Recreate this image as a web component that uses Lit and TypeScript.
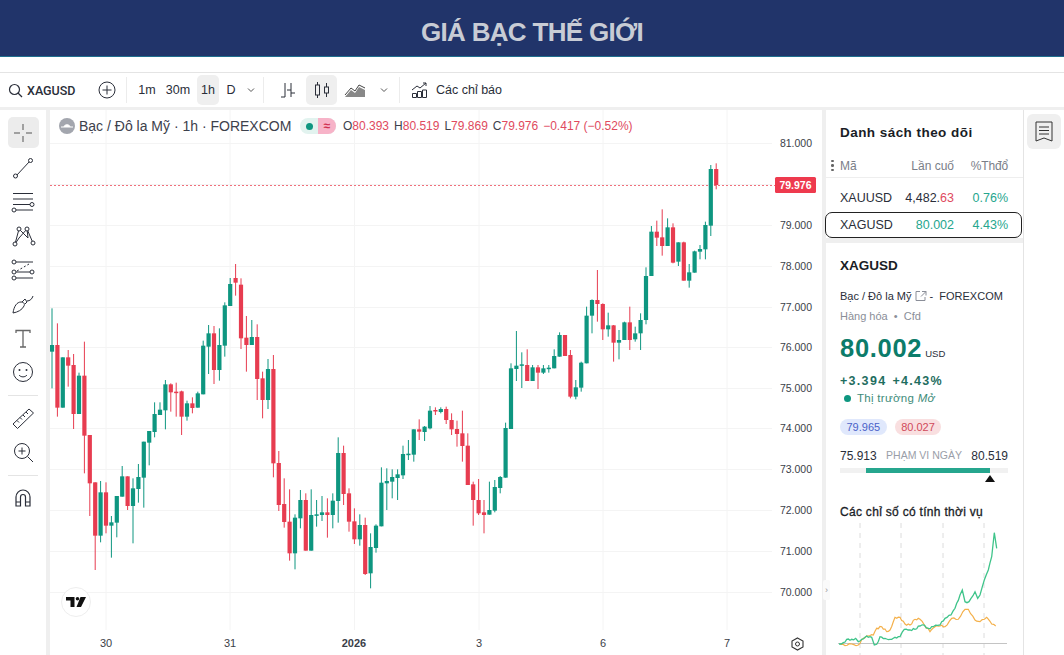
import { LitElement, html, css, svg } from "lit";
import { customElement } from "lit/decorators.js";

const G = "#0e9680";
const R = "#e73c50";
type C = [number, number, number, number, number];
// [color(0 green,1 red), high, bodyTop, bodyBottom, low] measured at 3x, per segment with base y
const A: C[] = [
  [0,85,195,215,325],[1,130,195,383,410],[0,232,232,383,383],[1,210,232,257,320],[1,222,255,402,447],[0,278,287,402,402],[1,185,287,467,580],[1,465,465,610,708],[1,607,607,767,870],[0,603,637,767,787],[1,607,637,737,760],[0,708,727,737,833],[0,648,648,728,772],[0,558,589,650,650],[1,589,589,678,690],[0,595,625,678,790],[0,552,591,627,668],[0,485,485,593,683],[0,453,453,488,556],[0,367,402,456,472],[0,367,389,405,405],[0,300,313,391,448],[1,310,313,337,395],[1,308,335,338,410],[1,332,334,410,465],[0,362,370,410,422],[1,352,370,384,400],[0,335,340,383,383],[0,182,197,343,343],[0,135,160,200,282],[1,138,160,270,312],[0,145,195,270,302],[0,67,76,197,230],[0,-6,12,78,78],[1,-48,-6,8,47],[1,-5,14,175,207],[1,108,173,195,275],[0,120,171,195,195],[1,133,171,297,360],[1,275,295,360,415],[0,237,267,360,387],[1,225,267,550,592],[1,513,549,675,693],[1,595,672,726,743],[1,628,725,820,842],[0,703,713,820,868],[0,630,660,715,745],[1,640,660,812,812],
];
const B: C[] = [
  [0,328,405,512,512],[0,360,403,405,440],[0,348,397,405,423],[1,355,397,405,473],[0,340,362,405,445],[0,172,219,363,428],[1,197,219,342,375],[1,325,340,425,455],[1,385,424,478,492],[0,403,435,478,497],[1,413,435,582,585],[0,460,501,580,625],[0,433,437,504,518],[0,262,308,439,439],[0,265,303,310,390],[0,268,291,305,355],[0,268,283,294,360],[0,197,222,286,297],[0,180,221,224,240],[0,148,148,224,245],[1,118,148,155,180],[0,138,140,156,183],[0,78,92,145,148],[1,82,90,93,105],[0,82,87,96,100],[1,80,87,120,132],[1,100,120,148,165],[1,122,147,162,200],[1,92,160,198,245],[1,160,197,315,315],[1,305,313,360,437],[1,297,360,400,405],[1,360,397,405,460],[0,305,390,404,404],[0,300,321,392,397],[0,288,291,324,340],[0,128,144,293,293],
];
const Cc: C[] = [
  [0,130,145,327,327],[0,33,137,147,183],[0,97,133,137,204],[1,88,135,183,183],[0,135,142,183,183],[1,135,142,158,207],[0,135,145,158,162],[0,135,143,147,158],
];
const D: C[] = [
  [0,628,648,685,685],[0,577,585,650,650],[1,585,585,648,648],[1,630,645,770,775],[0,720,742,770,778],[0,665,668,743,755],[0,500,527,670,670],[0,478,480,527,580],[1,390,480,492,545],[1,490,492,568,600],[0,518,556,568,590],[1,555,556,608,665],[0,570,600,608,658],[0,545,547,600,600],[1,500,547,600,630],[0,560,580,598,605],[0,520,540,580,630],[0,382,408,540,553],[0,258,275,408,408],[1,242,275,293,318],[1,208,292,318,347],[0,235,262,318,318],[1,250,262,368,370],[0,307,307,365,378],[1,305,307,422,422],[0,372,397,422,443],[0,332,334,398,398],[0,315,327,335,358],[0,245,255,328,358],[0,75,87,257,288],[1,70,87,135,148],
];
const seg = (a: C[], base: number) => a.map(([c, h, t, b, l]) => [c, base + h / 3, base + t / 3, base + b / 3, base + l / 3]);
const candles = [...seg(A, 280), ...seg(B, 380), ...seg(Cc, 320), ...seg(D, 140)];

const priceLabels = [[81, 143], [79, 225], [78, 266], [77, 307], [76, 347], [75, 388], [74, 428], [73, 469], [72, 510], [71, 551], [70, 592]];
const gridY = [143, 184, 225, 266, 307, 347, 388, 428, 469, 510, 551, 592];
const gridX = [106, 230, 354.5, 479, 603, 727];
const times: [string, number, boolean][] = [["30", 106, false], ["31", 230, false], ["2026", 354, true], ["3", 479, false], ["6", 603, false], ["7", 727, false]];

const greenPts = [[42,372],[55,368],[65,358],[80,358],[92,355],[100,365],[110,358],[125,348],[140,352],[148,375],[155,373],[165,350],[180,355],[195,358],[210,352],[225,350],[238,328],[255,330],[270,328],[285,318],[298,315],[310,325],[325,320],[345,315],[360,295],[378,285],[390,265],[405,225],[412,210],[420,245],[432,245],[450,215],[458,235],[465,225],[478,180],[490,150],[500,110],[508,38],[515,85]];
const orangePts = [[45,372],[60,377],[80,372],[100,375],[115,355],[130,348],[145,345],[155,325],[170,320],[185,335],[195,330],[210,292],[225,292],[240,312],[255,315],[270,298],[285,298],[298,315],[315,335],[330,320],[345,318],[360,320],[380,295],[400,298],[420,268],[430,268],[450,300],[465,305],[485,292],[500,312],[512,318]];
function spark(pts: number[][]) {
  const out: string[] = [];
  pts.forEach((p, i) => {
    if (i > 0) {
      const q = pts[i - 1];
      const n = Math.max(1, Math.round((p[0] - q[0]) / 6));
      for (let k = 1; k < n; k++) {
        const f = k / n;
        const x = q[0] + (p[0] - q[0]) * f;
        const y = q[1] + (p[1] - q[1]) * f + 3 * Math.sin(x * 1.7) ;
        out.push(`${(x / 3).toFixed(1)},${(y / 3).toFixed(1)}`);
      }
    }
    out.push(`${(p[0] / 3).toFixed(1)},${(p[1] / 3).toFixed(1)}`);
  });
  return out.join(" ");
}

const I = (body: unknown) => html`<svg width="28" height="28" viewBox="0 0 28 28" fill="none" stroke="#2a2e39" stroke-width="1">${body}</svg>`;
const tools = [
  svg`<path d="M14 5v6M14 17v6M5 14h6M17 14h6" stroke="#555" />`,
  svg`<path d="M7.5 21.5L20.5 7.5"/><circle cx="6.5" cy="22" r="2" fill="#fff"/><circle cx="21.5" cy="6.5" r="2" fill="#fff"/>`,
  svg`<path d="M4 5.5h20M4 11h20M4 16.500h17M7 22h17"/><circle cx="23" cy="16.500" r="2" fill="#fff"/><circle cx="5" cy="22" r="2" fill="#fff"/>`,
  svg`<path d="M6 22L10 7l9 9L18 7l6 14M10 7l9 9M18 7l-8 9-4 6"/><circle cx="6" cy="22" r="2" fill="#fff"/><circle cx="10" cy="7" r="2" fill="#fff"/><circle cx="18" cy="7" r="2" fill="#fff"/><circle cx="24" cy="21" r="2" fill="#fff"/>`,
  svg`<path d="M7 6h17M7 16h15M7 22h17" /><path d="M8 15l12-7" stroke-dasharray="2 2"/><circle cx="5" cy="6" r="2" fill="#fff"/><circle cx="5" cy="16" r="2" fill="#fff"/><circle cx="23" cy="16" r="2" fill="#fff"/><circle cx="5" cy="22" r="2" fill="#fff"/>`,
  svg`<path d="M4 23c1-7 4-11 8-11 3 0 4 2 3 4-2 4-6 6-11 7zM13 12l3-3 2 3-2 2M18 11c3 0 5-2 6-5"/>`,
  svg`<path d="M7 9V6.500h14V9M14 6.500V23M11 23h6" stroke="#666" stroke-width="1.300"/>`,
  svg`<circle cx="14" cy="14" r="9.500"/><circle cx="10.500" cy="12" r="1" fill="#2a2e39" stroke="none"/><circle cx="17.500" cy="12" r="1" fill="#2a2e39" stroke="none"/><path d="M10 17c2 2.500 6 2.500 8 0"/>`,
];
const tools2 = [
  svg`<path d="M4 20L20 5l4.500 4-16 15.500zM8 16.500l2 2M11 13.500l2 2M14 11l2 2M17 8l2 2" />`,
  svg`<circle cx="13" cy="13" r="7.500"/><path d="M18.500 18.500L24 24M13 9.500v7M9.500 13h7"/>`,
];
const magnet = svg`<path d="M7 22v-9a7 7 0 0 1 14 0v9h-4.500v-9a2.500 2.500 0 0 0-5 0v9zM7 18h4.500M16.500 18H21" stroke-width="1.200"/>`;

@customElement("app-root")
export class AppRoot extends LitElement {
  static styles = css`
    :host { display: block; width: 1064px; height: 655px; overflow: hidden; background: #fff; font-family: "Liberation Sans", Arial, sans-serif; color: #131722; }
    .top { background: #21346a; border-bottom: 1px solid #1f6f8f; display: flex; align-items: center; justify-content: center; color: #c8ccd5; font-weight: 700; font-size: 26px; letter-spacing: -0.7px; padding-top: 8px; box-sizing: border-box; height: 57px; }
    .gap { height: 15px; border-bottom: 1px solid #e4e4e4; box-sizing: content-box; }
    .bar { height: 34px; display: flex; align-items: center; font-size: 12.500px; color: #2a2e39; }
    .bar svg { display: block; flex: none; }
    .sym { font-family: Roboto, sans-serif; font-weight: 500; font-size: 12.500px; margin-left: 4px; width: 48px; }
    .vd { width: 1px; height: 26px; background: #ececec; flex: none; }
    .tf { height: 30px; display: flex; align-items: center; justify-content: center; border-radius: 5px; flex: none; }
    .on { background: #efefef; }
    .m1 { width: 20px; margin-left: 10px; }
    .m30 { width: 26px; margin-left: 8px; }
    .m1h { width: 22px; margin-left: 6px; }
    .md { width: 12px; margin-left: 6px; }
    .mc { width: 31px; margin-left: 10px; }
    .lbl { margin-left: 7px; font-size: 12.500px; }
    .main { display: flex; height: 545px; border-top: 3px solid #efefef; box-sizing: content-box; }
    .left { width: 46px; flex: none; border-right: 4px solid #efefef; padding-top: 7px; display: flex; flex-direction: column; align-items: center; box-sizing: content-box; }
    .slot { width: 31px; height: 34px; flex: none; display: flex; align-items: center; justify-content: center; }
    .active { height: 31px; margin-bottom: 3px; background: #ececec; border-radius: 5px; }
    .hr { width: 30px; height: 1px; background: #e4e4e4; margin: 6px 0 5px; flex: none; }
    .left svg { display: block; }
    .chart { position: relative; width: 772px; flex: none; height: 545px; }
    .chart > svg { display: block; }
    .legend { position: absolute; left: 8px; top: 6px; height: 20px; display: flex; align-items: center; font-size: 12px; white-space: nowrap; }
    .legend .nm { font-size: 14px; color: #3d414c; margin-left: 3px; width: 221px; }
    .pill { display: flex; width: 36px; height: 16px; border-radius: 8px; overflow: hidden; background: #e2f3ef; }
    .pill .a { width: 18px; display: flex; align-items: center; justify-content: center; }
    .pill .a i { width: 7px; height: 7px; border-radius: 50%; background: #0e9680; display: block; }
    .pill .b { width: 18px; background: #f7b3c8; color: #d0304f; font-size: 12px; line-height: 16px; text-align: center; font-weight: 700; }
    .ohlc { margin-left: 7px; color: #3d414c; display: flex; gap: 5px; }
    .ohlc b { font-weight: 400; color: #e04a5e; }
    .logo { position: absolute; left: 11px; top: 477px; width: 30px; height: 30px; border-radius: 50%; background: #fff; border: 1px solid #eeeeee; box-sizing: border-box; display: flex; align-items: center; justify-content: center; }
    .panel { width: 197px; flex: none; border-left: 4px solid #efefef; border-right: 1px solid #e4e4e4; display: flex; flex-direction: column; position: relative; box-sizing: content-box; }
    .handle { position: absolute; left: -3px; top: 470px; width: 7px; height: 20px; background: #fafafa; border-radius: 2px; color: #999; font-size: 9px; line-height: 20px; text-align: center; }
    .watch { height: 128px; flex: none; border-bottom: 5px solid #efefef; box-sizing: content-box; }
    .wt { padding: 15px 0 0 14px; height: 29px; font-size: 13.500px; font-weight: 700; letter-spacing: 0.45px; line-height: 16px; color: #1a1d26; box-sizing: content-box; }
    .row { display: grid; grid-template-columns: 14px 52px 62px 54px; align-items: center; font-size: 12.500px; color: #2a2e39; }
    .num, .pct { text-align: right; }
    .hd { color: #7a7e88; font-size: 12px; border-bottom: 1px solid #eeeeee; box-sizing: border-box; height: 24px; }
    .hd .num { overflow: hidden; white-space: nowrap; }
    .hd .pct { letter-spacing: -0.15px; }
    .dots { display: flex; flex-direction: column; gap: 2px; padding-left: 5px; }
    .dots i { width: 2.500px; height: 2.500px; background: #666; border-radius: 50%; display: block; }
    .r1 { height: 34px; padding-top: 5px; box-sizing: border-box; }
    .r2 { height: 26px; margin: 0 1px 0 -1px; border: 1px solid #222; border-radius: 7px; box-sizing: border-box; grid-template-columns: 14px 52px 62px 54px; }
    .teal { color: #26a68e; }
    .red { color: #e04a5e; }
    .det { padding: 0 14px; flex: 1; position: relative; }
    .sy { font-size: 13.500px; font-weight: 700; margin-top: 15px; line-height: 16px; color: #1a1d26; }
    .nm2 { display: flex; align-items: center; font-size: 11px; color: #2a2e39; margin-top: 15px; height: 14px; white-space: nowrap; gap: 3px; }
    .cat { font-size: 11px; color: #8a8e98; margin-top: 6px; height: 14px; line-height: 14px; }
    .px { display: flex; align-items: baseline; margin-top: 9px; height: 32px; color: #0c7c6a; font-weight: 700; font-size: 25.500px; letter-spacing: 0.7px; line-height: 32px; }
    .px span { font-size: 9.500px; font-weight: 400; color: #2a2e39; letter-spacing: 0; margin-left: 3px; }
    .chg { font-size: 12.500px; font-weight: 700; letter-spacing: 1.300px; color: #1f6e5f; margin-top: 10px; height: 15px; line-height: 15px; display: flex; gap: 6px; white-space: nowrap; }
    .mkt { display: flex; align-items: center; gap: 6px; font-size: 11.500px; color: #3e8c7a; margin: 1px 0 0 4px; height: 16px; letter-spacing: 0.3px; }
    .mkt i { width: 7px; height: 7px; border-radius: 50%; background: #0e9680; display: block; }
    .chips { display: flex; gap: 8px; margin-top: 13px; height: 16px; }
    .chip { height: 16px; border-radius: 8px; line-height: 16px; font-size: 11px; padding: 0 6.500px; }
    .cb { background: #e0e8fc; color: #4a62c8; }
    .cr { background: #f9dfe0; color: #d04a5a; }
    .rng { display: flex; justify-content: space-between; margin-top: 13px; height: 16px; font-size: 12px; line-height: 16px; width: 168px; color: #2a2e39; }
    .rng span { font-size: 10.500px; color: #9a9ea8; line-height: 14px; }
    .track { width: 168px; height: 5px; background: #f1f1f1; margin-top: 4px; display: flex; }
    .fill { margin-left: 26px; width: 124px; height: 5px; background: #26a68e; }
    .tri { width: 0; height: 0; border-left: 5px solid transparent; border-right: 5px solid transparent; border-bottom: 7px solid #111; margin: 2px 0 0 145px; }
    .ct { font-size: 12px; letter-spacing: 0.3px; margin-top: 22px; height: 16px; line-height: 16px; color: #1a1d26; font-weight: 400; -webkit-text-stroke: 0.3px #1a1d26; white-space: nowrap; }
    .sparkw { position: absolute; left: -1px; top: 277px; }
    .sparkw svg { display: block; }
    .rail { flex: 1; padding: 4px 0 0 3px; }
    .railb { width: 34px; height: 35px; background: #efefef; border-radius: 6px; display: flex; align-items: center; justify-content: center; }
  `;

  render() {
    const st = 5.4;
    return html`
      <div class="top">GIÁ BẠC THẾ GIỚI</div>
      <div class="gap"></div>
      <div class="bar">
        <svg style="margin-left:8px" width="15" height="15" viewBox="0 0 15 15" fill="none" stroke="#2a2e39" stroke-width="1.200"><circle cx="6.500" cy="6.500" r="5"/><path d="M10 10l4 4"/></svg>
        <span class="sym">XAGUSD</span>
        <svg style="margin-left:22px" width="20" height="20" viewBox="0 0 20 20" fill="none" stroke="#2a2e39"><circle cx="10" cy="10" r="8"/><path d="M10 5.500v9M5.500 10h9"/></svg>
        <span class="vd" style="margin-left:9px"></span>
        <span class="tf m1">1m</span>
        <span class="tf m30">30m</span>
        <span class="tf on m1h">1h</span>
        <span class="tf md">D</span>
        <svg style="margin-left:9px" width="10" height="10" viewBox="0 0 10 10" fill="none" stroke="#555"><path d="M2 3.500l3 3 3-3"/></svg>
        <span class="vd" style="margin-left:7px"></span>
        <svg style="margin-left:16px" width="16" height="18" viewBox="0 0 16 18" fill="none" stroke="#2a2e39"><path d="M5 2v14M1 16h4M11 2v14M7 9h4M11 12h4"/></svg>
        <span class="tf on mc"><svg width="16" height="18" viewBox="0 0 16 18" fill="none" stroke="#2a2e39"><rect x="1.500" y="4" width="4" height="10"/><path d="M3.500 1v3M3.500 14v3"/><rect x="10.500" y="6" width="4" height="6"/><path d="M12.500 2v4M12.500 12v4"/></svg></span>
        <svg style="margin-left:7px" width="22" height="16" viewBox="0 0 22 16"><path d="M1 13L7 6l4 3 4-6 6 3" fill="none" stroke="#444"/><path d="M1 15L7 8l4 3 4-6 6 3v7z" fill="#888"/></svg>
        <svg style="margin-left:13px" width="10" height="10" viewBox="0 0 10 10" fill="none" stroke="#555"><path d="M2 3.500l3 3 3-3"/></svg>
        <span class="vd" style="margin-left:10px"></span>
        <svg style="margin-left:11px" width="18" height="18" viewBox="0 0 18 18" fill="none" stroke="#2a2e39" stroke-width="1"><path d="M1 9l5-4 3 2 6-5M15 2h-3M15 2v3" /><path d="M1.500 16.500v-4h4v4zM6.500 16.500v-6h4v6zM11.500 16.500V9h4v7.500z"/></svg>
        <span class="lbl">Các chỉ báo</span>
      </div>
      <div class="main">
        <div class="left">
          ${tools.map((t, i) => html`<div class="slot ${i === 0 ? "active" : ""}">${I(t)}</div>`)}
          <div class="hr"></div>
          ${tools2.map((t) => html`<div class="slot">${I(t)}</div>`)}
          <div class="hr"></div>
          <div class="slot">${I(magnet)}</div>
        </div>
        <div class="chart">
          <svg width="772" height="545" viewBox="50 110 772 545" font-family="Liberation Sans, Arial, sans-serif" font-size="10.500">
            ${gridY.map((y) => svg`<line x1="50" x2="772" y1=${y + 0.5} y2=${y + 0.5} stroke="#f4f4f4"/>`)}
            ${gridX.map((x) => svg`<line y1="110" y2="630" x1=${x} x2=${x} stroke="#f4f4f4"/>`)}
            <line x1="50" x2="775" y1="185.500" y2="185.500" stroke="#f0707c" stroke-dasharray="2 2"/>
            ${candles.map(([c, h, t, b, l], i) => {
              const x = 52 + st * i;
              const col = c ? R : G;
              return svg`<line x1=${x} x2=${x} y1=${h} y2=${l} stroke=${col} stroke-width="1"/><rect x=${x - 2.1} y=${t} width="4.200" height=${Math.max(b - t, 1.5)} fill=${col}/>`;
            })}
            ${priceLabels.map(([p, y]) => svg`<text x="812" y=${y + 4} text-anchor="end" fill="#3a3e48">${p}.000</text>`)}
            <rect x="775" y="177" width="41" height="16" rx="1.500" fill="#ee3a4e"/>
            <text x="795.500" y="189" text-anchor="middle" fill="#fff" font-weight="700" font-size="10.500">79.976</text>
            ${times.map(([s, x, b]) => svg`<text x=${x} y="647" text-anchor="middle" fill="#3a3e48" font-size="11" font-weight=${b ? 700 : 400}>${s}</text>`)}
            <path d="M797.500 638l5.500 3v6l-5.500 3-5.500-3v-6z" fill="none" stroke="#333" stroke-width="1.100"/>
            <circle cx="797.500" cy="644" r="2" fill="none" stroke="#333"/>
          </svg>
          <div class="legend">
            <svg width="18" height="18" viewBox="0 0 18 18"><circle cx="9" cy="9" r="8" fill="#a3a6ae"/><path d="M3 10h12M6 10c0-3 6-3 6 0" stroke="#fff" fill="#fff"/></svg>
            <span class="nm">Bạc / Đô la Mỹ · 1h · FOREXCOM</span>
            <span class="pill"><span class="a"><i></i></span><span class="b">≈</span></span>
            <span class="ohlc">
              <span>O<b>80.393</b></span><span>H<b>80.519</b></span><span>L<b>79.869</b></span><span>C<b>79.976</b></span>
              <b>−0.417 (−0.52%)</b>
            </span>
          </div>
          <div class="logo">
            <svg width="20" height="10" viewBox="0 0 20 10"><path d="M0 0h8.500v10H4.500V3.500H0zM14.500 0H20L15 10H10.500z" fill="#111"/><circle cx="11.500" cy="1.800" r="1.800" fill="#111"/></svg>
          </div>
        </div>
        <div class="panel">
          <div class="handle">›</div>
          <div class="watch">
            <div class="wt">Danh sách theo dõi</div>
            <div class="row hd"><span class="dots"><i></i><i></i><i></i></span><span>Mã</span><span class="num">Lần cuố</span><span class="pct">%Thđổ</span></div>
            <div class="row r1"><span></span><span>XAUUSD</span><span class="num">4,482.<span class="red">63</span></span><span class="pct teal">0.76%</span></div>
            <div class="row r2"><span></span><span>XAGUSD</span><span class="num teal">80.002</span><span class="pct teal">4.43%</span></div>
          </div>
          <div class="det">
            <div class="sy">XAGUSD</div>
            <div class="nm2">Bạc / Đô la Mỹ
              <svg width="12" height="12" viewBox="0 0 12 12" fill="none" stroke="#8a8e98"><path d="M5 1.500H1v9h9V7M7 1.500h4v4M11 1.500L6 6.500"/></svg>
              <span>-&nbsp; FOREXCOM</span></div>
            <div class="cat">Hàng hóa &nbsp;•&nbsp; Cfd</div>
            <div class="px">80.002<span>USD</span></div>
            <div class="chg"><span>+3.394</span><span>+4.43%</span></div>
            <div class="mkt"><i></i><span>Thị trường <em>Mở</em></span></div>
            <div class="chips"><span class="chip cb">79.965</span><span class="chip cr">80.027</span></div>
            <div class="rng">75.913<span>PHẠM VI NGÀY</span>80.519</div>
            <div class="track"><div class="fill"></div></div>
            <div class="tri"></div>
            <div class="ct">Các chỉ số có tính thời vụ</div>
            <div class="sparkw">
              <svg width="185" height="135" viewBox="0 0 185 135" fill="none">
                ${[35, 76, 118, 159].map((x) => svg`<line x1=${x} x2=${x} y1="3" y2="135" stroke="#dcdcdc" stroke-dasharray="5 5"/>`)}
                <line x1="13" x2="182" y1="123.500" y2="123.500" stroke="#c4c4c4"/>
                <polyline points=${spark(orangePts)} stroke="#f4b04a" stroke-width="1.200"/>
                <polyline points=${spark(greenPts)} stroke="#3fc48a" stroke-width="1.300"/>
              </svg>
            </div>
          </div>
        </div>
        <div class="rail">
          <div class="railb">
            <svg width="20" height="24" viewBox="0 0 20 24" fill="none" stroke="#333"><path d="M2 2h16v19l-8-3-8 3zM5 7h10M5 10.500h10M5 14h10"/></svg>
          </div>
        </div>
      </div>
    `;
  }
}
